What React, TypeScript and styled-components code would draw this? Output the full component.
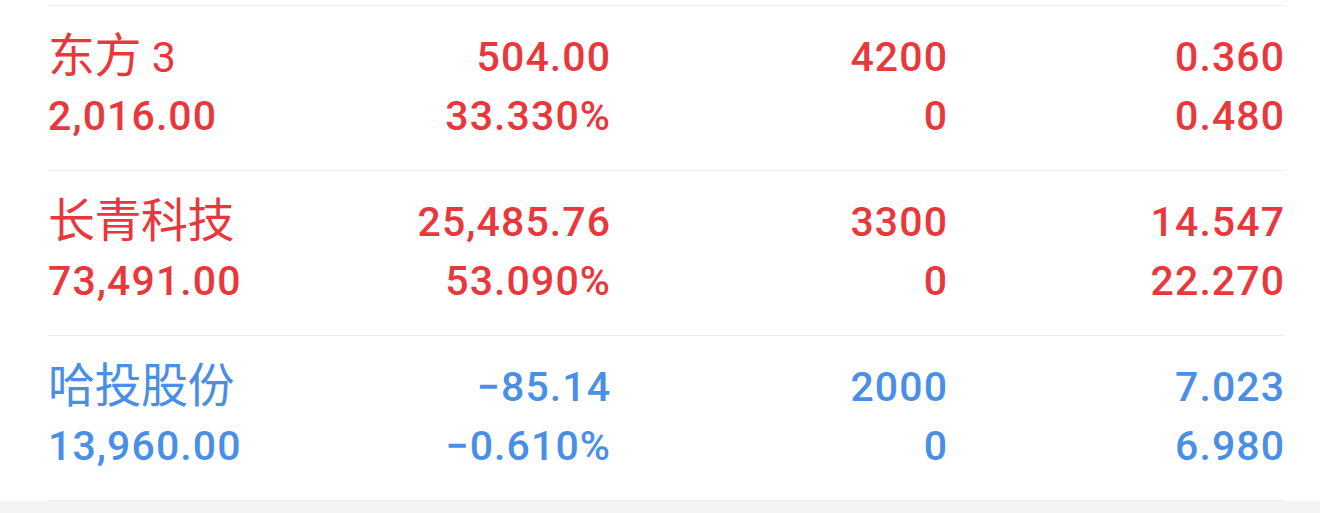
import React from "react";
import styled, { createGlobalStyle } from "styled-components";

const Global = createGlobalStyle`
  html, body {
    margin: 0;
    padding: 0;
    background: #f4f4f4;
  }
  body {
    font-family: Roboto, "Noto Sans CJK SC", sans-serif;
  }
`;

const Page = styled.div`
  background: #ffffff;
  padding-top: 5px;
`;

const List = styled.div`
  margin: 0 36px 0 48px;
  border-top: 1px solid #ececec;
`;

const Row = styled.div`
  box-sizing: border-box;
  height: 165px;
  padding-top: 22px;
  border-bottom: 1px solid #ececec;
  display: grid;
  grid-template-columns: 225px 1fr 1fr 1fr;
  grid-template-rows: 59px 59px;
`;

type Tone = "up" | "down";

const Cell = styled.div<{ $tone: Tone; $align: "start" | "end" }>`
  font-family: Roboto, "Noto Sans CJK SC", sans-serif;
  font-size: 41px;
  font-weight: 500;
  letter-spacing: 1.1px;
  line-height: 59px;
  white-space: nowrap;
  text-align: ${(p) => (p.$align === "end" ? "right" : "left")};
  margin-right: ${(p) => (p.$align === "end" ? "-1.1px" : "0")};
  color: ${(p) => (p.$tone === "up" ? "#e9383c" : "#4a8fe6")};
`;

const Name = styled(Cell)`
  font-size: 43px;
  font-weight: 400;
  letter-spacing: 0;
`;

const Han = styled.span`
  font-family: "Noto Sans CJK SC", sans-serif;
  font-size: 47px;
  line-height: 1;
  letter-spacing: -0.5px;
`;

type Item = {
  name: string;
  suffix?: string;
  tone: Tone;
  top: [string, string, string];
  bottom: [string, string, string, string];
};

const items: Item[] = [
  {
    name: "东方",
    suffix: " 3",
    tone: "up",
    top: ["504.00", "4200", "0.360"],
    bottom: ["2,016.00", "33.330%", "0", "0.480"],
  },
  {
    name: "长青科技",
    tone: "up",
    top: ["25,485.76", "3300", "14.547"],
    bottom: ["73,491.00", "53.090%", "0", "22.270"],
  },
  {
    name: "哈投股份",
    tone: "down",
    top: ["−85.14", "2000", "7.023"],
    bottom: ["13,960.00", "−0.610%", "0", "6.980"],
  },
];

export default function App() {
  return (
    <>
      <Global />
      <Page>
        <List>
          {items.map((it) => (
            <Row key={it.name}>
              <Name $tone={it.tone} $align="start">
                <Han>{it.name}</Han>
                {it.suffix}
              </Name>
              {it.top.map((v, i) => (
                <Cell key={"t" + i} $tone={it.tone} $align="end">
                  {v}
                </Cell>
              ))}
              {it.bottom.map((v, i) => (
                <Cell key={"b" + i} $tone={it.tone} $align={i === 0 ? "start" : "end"}>
                  {v}
                </Cell>
              ))}
            </Row>
          ))}
        </List>
      </Page>
    </>
  );
}
